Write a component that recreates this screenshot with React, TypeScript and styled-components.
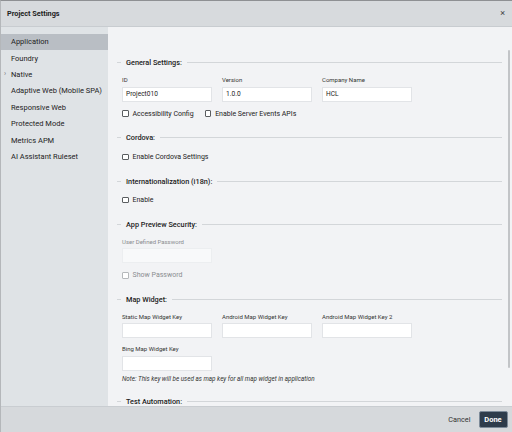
import React from "react";
import styled, { createGlobalStyle } from "styled-components";

const GlobalStyle = createGlobalStyle`
  html, body { margin: 0; padding: 0; background: #f2f3f5; }
  body { font-family: Roboto, "Liberation Sans", sans-serif; color: #222; }
  * { box-sizing: border-box; }
`;

const Dialog = styled.div`
  width: 512px;
  height: 432px;
  display: flex;
  flex-direction: column;
  border-top: 1px solid #8e9093;
  border-left: 1px solid #b4b7ba;
  overflow: hidden;
`;

const Header = styled.div`
  height: 26px;
  flex: none;
  display: flex;
  align-items: center;
  justify-content: space-between;
  padding: 0 7px 0 6px;
  background: #d7dadd;
  border-bottom: 1px solid #c8ccd0;
`;

const Title = styled.div`
  font-size: 7.3px;
  font-weight: 700;
  color: #222;
`;

const Close = styled.div`
  font-size: 9px;
  color: #444;
  line-height: 1;
`;

const Body = styled.div`
  flex: 1;
  min-height: 0;
  display: flex;
`;

const Sidebar = styled.div`
  width: 107px;
  flex: none;
  background: #dfe3e6;
  padding-top: 6.5px;
  display: flex;
  flex-direction: column;
`;

const NavItem = styled.div<{ $active?: boolean }>`
  height: 16.4px;
  display: flex;
  align-items: center;
  padding-left: 10px;
  position: relative;
  font-size: 7.5px;
  color: #222;
  background: ${(p) => (p.$active ? "#b9bec4" : "transparent")};
`;

const Chevron = styled.span`
  position: absolute;
  left: 3px;
  font-size: 7px;
  color: #777;
`;

const Content = styled.div`
  flex: 1;
  min-width: 0;
  position: relative;
  overflow: hidden;
  background: #f2f3f5;
  padding: 29.7px 10px 0 14px;
  display: flex;
  flex-direction: column;
  gap: 13.2px;
`;

const Thumb = styled.div`
  position: absolute;
  right: 2px;
  top: 23px;
  width: 2.5px;
  height: 318px;
  background: #c2c4c7;
  border-radius: 1px;
`;

const Section = styled.div<{ $pull?: number }>`
  display: flex;
  flex-direction: column;
  margin-top: ${(p) => p.$pull ?? 0}px;
`;

const Heading = styled.div`
  height: 12px;
  margin-left: -5px;
  display: flex;
  align-items: center;
  gap: 5px;
  font-size: 7.3px;
  font-weight: 500;
  color: #222;
  &::before {
    content: "";
    width: 4px;
    height: 1px;
    background: #d3d6d9;
  }
  &::after {
    content: "";
    flex: 1;
    height: 1px;
    background: #d3d6d9;
  }
`;

const SectionBody = styled.div<{ $top: number; $gap?: number }>`
  margin-top: ${(p) => p.$top}px;
  display: flex;
  flex-direction: column;
  gap: ${(p) => p.$gap ?? 7}px;
`;

const FieldGrid = styled.div`
  display: grid;
  grid-template-columns: repeat(3, 90px);
  column-gap: 10px;
  row-gap: 5.4px;
`;

const Field = styled.div`
  display: flex;
  flex-direction: column;
  gap: 2px;
`;

const Label = styled.div<{ $disabled?: boolean }>`
  height: 10px;
  display: flex;
  align-items: center;
  font-size: 6px;
  color: ${(p) => (p.$disabled ? "#8a8d90" : "#333")};
`;

const Input = styled.div<{ $disabled?: boolean }>`
  height: 15px;
  background: ${(p) => (p.$disabled ? "#f8f9fa" : "#ffffff")};
  border: 1px solid ${(p) => (p.$disabled ? "#eceef0" : "#e2e4e7")};
  display: flex;
  align-items: center;
  padding-left: 3px;
  font-size: 6.6px;
  color: #222;
`;

const CheckRow = styled.div`
  height: 10px;
  display: flex;
  align-items: center;
  gap: 11px;
`;

const Check = styled.label<{ $disabled?: boolean }>`
  display: flex;
  align-items: center;
  gap: 4px;
  font-size: 7px;
  color: ${(p) => (p.$disabled ? "#8a8d90" : "#222")};
`;

const Box = styled.span<{ $disabled?: boolean }>`
  width: 6.5px;
  height: 6.5px;
  border: 1px solid ${(p) => (p.$disabled ? "#b5b8bb" : "#5a5d60")};
  border-radius: 1px;
  background: #fff;
`;

const Note = styled.div`
  height: 10px;
  display: flex;
  align-items: center;
  font-size: 6.3px;
  font-style: italic;
  color: #333;
`;

const Footer = styled.div`
  height: 26px;
  flex: none;
  background: #d6d9dc;
  border-top: 1px solid #c9cdd1;
  display: flex;
  align-items: center;
  justify-content: flex-end;
  gap: 8px;
  padding-right: 4.5px;
`;

const Cancel = styled.div`
  font-size: 7.3px;
  color: #333;
`;

const Done = styled.div`
  width: 29px;
  height: 17.5px;
  background: #2e3c4b;
  border: 1px solid #7d8b99;
  border-radius: 2px;
  display: flex;
  align-items: center;
  justify-content: center;
  font-size: 7.5px;
  font-weight: 700;
  color: #fff;
`;

const navItems = [
  "Application",
  "Foundry",
  "Native",
  "Adaptive Web (Mobile SPA)",
  "Responsive Web",
  "Protected Mode",
  "Metrics APM",
  "AI Assistant Ruleset",
];

export default function App() {
  return (
    <>
      <GlobalStyle />
      <Dialog>
        <Header>
          <Title>Project Settings</Title>
          <Close>×</Close>
        </Header>
        <Body>
          <Sidebar>
            {navItems.map((n, i) => (
              <NavItem key={n} $active={i === 0}>
                {n === "Native" && <Chevron>›</Chevron>}
                {n}
              </NavItem>
            ))}
          </Sidebar>
          <Content>
            <Thumb />
            <Section>
              <Heading>General Settings:</Heading>
              <SectionBody $top={6}>
                <FieldGrid>
                  <Field>
                    <Label>ID</Label>
                    <Input>Project010</Input>
                  </Field>
                  <Field>
                    <Label>Version</Label>
                    <Input>1.0.0</Input>
                  </Field>
                  <Field>
                    <Label>Company Name</Label>
                    <Input>HCL</Input>
                  </Field>
                </FieldGrid>
                <CheckRow>
                  <Check>
                    <Box />
                    Accessibility Config
                  </Check>
                  <Check>
                    <Box />
                    Enable Server Events APIs
                  </Check>
                </CheckRow>
              </SectionBody>
            </Section>
            <Section>
              <Heading>Cordova:</Heading>
              <SectionBody $top={8}>
                <CheckRow>
                  <Check>
                    <Box />
                    Enable Cordova Settings
                  </Check>
                </CheckRow>
              </SectionBody>
            </Section>
            <Section>
              <Heading>Internationalization (i18n):</Heading>
              <SectionBody $top={8}>
                <CheckRow>
                  <Check>
                    <Box />
                    Enable
                  </Check>
                </CheckRow>
              </SectionBody>
            </Section>
            <Section>
              <Heading>App Preview Security:</Heading>
              <SectionBody $top={6}>
                <FieldGrid>
                  <Field>
                    <Label $disabled>User Defined Password</Label>
                    <Input $disabled />
                  </Field>
                </FieldGrid>
                <CheckRow>
                  <Check $disabled>
                    <Box $disabled />
                    Show Password
                  </Check>
                </CheckRow>
              </SectionBody>
            </Section>
            <Section>
              <Heading>Map Widget:</Heading>
              <SectionBody $top={6} $gap={3.5}>
                <FieldGrid>
                  <Field>
                    <Label>Static Map Widget Key</Label>
                    <Input />
                  </Field>
                  <Field>
                    <Label>Android Map Widget Key</Label>
                    <Input />
                  </Field>
                  <Field>
                    <Label>Android Map Widget Key 2</Label>
                    <Input />
                  </Field>
                  <Field>
                    <Label>Bing Map Widget Key</Label>
                    <Input />
                  </Field>
                </FieldGrid>
                <Note>Note: This key will be used as map key for all map widget in application</Note>
              </SectionBody>
            </Section>
            <Section $pull={-2}>
              <Heading>Test Automation:</Heading>
            </Section>
          </Content>
        </Body>
        <Footer>
          <Cancel>Cancel</Cancel>
          <Done>Done</Done>
        </Footer>
      </Dialog>
    </>
  );
}
